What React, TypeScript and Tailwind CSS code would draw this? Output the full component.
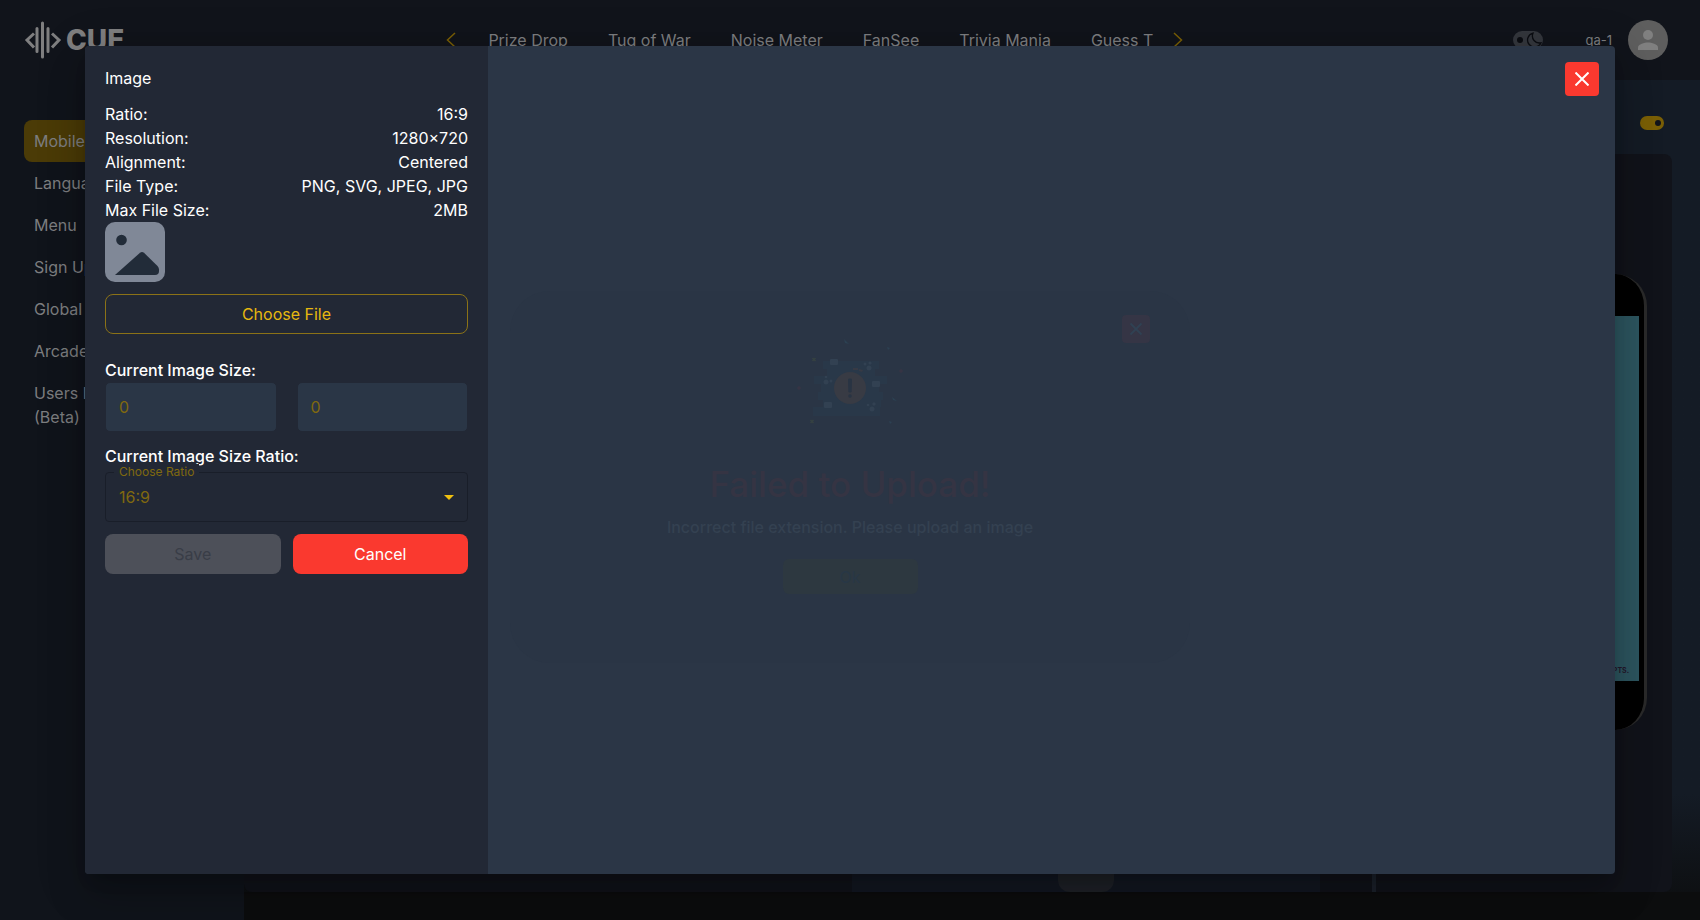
import { useState } from "react";

const specs: [string, string][] = [
  ["Ratio:", "16:9"],
  ["Resolution:", "1280×720"],
  ["Alignment:", "Centered"],
  ["File Type:", "PNG, SVG, JPEG, JPG"],
  ["Max File Size:", "2MB"],
];

const tabs = ["Prize Drop", "Tug of War", "Noise Meter", "FanSee", "Trivia Mania", "Guess T"];
const menu = ["Mobile", "Language", "Menu", "Sign Up", "Global", "Arcade"];

function Logo() {
  return (
    <div className="flex items-center gap-1 text-[#7f7f80]">
      <svg width="38" height="38" viewBox="0 0 38 38" fill="none" stroke="currentColor" strokeWidth="3" aria-hidden="true">
        <path d="M10 12.500 3 19l7 7.500" />
        <path d="M28 12.500 35 19l-7 7.500" />
        <path d="M13 7.500v23M18.500 2v34M24 7.500v23" strokeLinecap="round" />
      </svg>
      <span className="text-[28px] leading-8 font-extrabold">CUE</span>
    </div>
  );
}

function Chevron({ flip }: { flip?: boolean }) {
  return (
    <svg width="10" height="16" viewBox="0 0 10 16" fill="none" stroke="#7a5f06" strokeWidth="1.500" className={flip ? "rotate-180" : ""} aria-hidden="true">
      <path d="M9 1 1.500 8 9 15" />
    </svg>
  );
}

function Header() {
  return (
    <header className="flex h-20 shrink-0 items-center bg-[#11141b] pr-8 pl-6 text-[#7d7e80]">
      <Logo />
      <nav className="flex flex-1 items-center justify-center gap-8 pr-2">
        <button type="button" aria-label="Previous games"><Chevron /></button>
        <div className="flex gap-10">
          {tabs.map((t) => (
            <a key={t} href="#" className="whitespace-nowrap">{t}</a>
          ))}
        </div>
        <button type="button" aria-label="Next games" className="-ml-3"><Chevron flip /></button>
      </nav>
      <div className="flex items-center">
        <button type="button" aria-label="Toggle theme" className="mr-[42px] flex h-[18px] w-[30px] items-center justify-between rounded-full bg-[#34373d] pr-px pl-1">
          <span className="size-1.5 rounded-full bg-[#0b0d12]" />
          <svg width="16" height="16" viewBox="0 0 16 16" fill="none" stroke="#0b0d12" strokeWidth="1.300" aria-hidden="true">
            <path d="M7 1.200a7 7 0 1 0 8 9.600A7 7 0 0 1 7 1.200z" />
          </svg>
        </button>
        <span className="mr-4 pt-0.5 text-[13px]">qa-1</span>
        <svg width="40" height="40" viewBox="0 0 40 40" aria-hidden="true">
          <circle cx="20" cy="20" r="20" fill="#5e5e5e" />
          <circle cx="20" cy="15" r="5" fill="#808080" />
          <path d="M10 30v-2.500c0-3.300 6.700-5 10-5s10 1.700 10 5V30z" fill="#808080" />
        </svg>
      </div>
    </header>
  );
}

function Phone() {
  return (
    <div className="mt-[120px] mr-[25px] flex h-[456px] w-[230px] flex-col rounded-[32px] border-r-[3px] border-[#2a2a2a] bg-black pt-[42px] pr-[5px] pb-[49px]">
      <div className="flex flex-1 items-end justify-end bg-[#2d5660] pr-2.5 pb-1 text-[7px] leading-3 font-bold text-[#24182c]">
        RECEIPTS.
      </div>
    </div>
  );
}

function Page() {
  return (
    <div className="flex h-full flex-col overflow-hidden bg-[#0c0d0e]">
      <Header />
      <div className="flex min-h-0 flex-1">
        <aside className="w-[244px] shrink-0 bg-[#10141b] px-6 pt-10 text-[#7d7e80]">
          <ul>
            {menu.map((m, i) => (
              <li key={m}>
                <a href="#" className={i === 0 ? "block h-[42px] rounded-lg bg-[#4b3b07] px-2.5 leading-[42px]" : "block h-[42px] px-2.5 leading-[42px]"}>{m}</a>
              </li>
            ))}
            <li>
              <a href="#" className="block px-2.5 py-[9px] leading-6">Users Page<br />(Beta)</a>
            </li>
          </ul>
        </aside>
        <main className="flex min-w-0 flex-1 flex-col bg-linear-to-b from-[#141b25] from-85% to-[#0c0d0e]">
          <div className="flex h-[74px] shrink-0 items-center justify-end pt-3 pr-9">
            <button type="button" aria-label="Enabled" className="flex h-3.5 w-6 items-center justify-end rounded-full bg-[#7a5f06] pr-[3px]">
              <span className="size-1.5 rounded-full bg-[#11141b]" />
            </button>
          </div>
          <div className="mr-7 flex h-[738px] shrink-0 justify-end rounded-lg bg-[#11131a]">
            <div className="flex min-w-0 flex-1 items-end">
              <div className="flex-1" />
              <div className="flex h-16 w-[468px] items-end justify-center bg-[#131822]">
                <div className="h-10 w-14 rounded-xl bg-[#1f2228]" />
              </div>
              <div className="mr-4 ml-[52px] h-16 w-1 bg-[#1c222c]" />
            </div>
            <div className="flex w-[280px] justify-end">
              <Phone />
            </div>
          </div>
          <div className="flex-1 bg-[#0c0d0e]" />
        </main>
      </div>
    </div>
  );
}

function ErrorNotice() {
  return (
    <section className="pointer-events-none absolute inset-0 flex items-center justify-center pt-[34px]" aria-label="Upload error">
      <div className="relative flex h-[372px] w-[680px] flex-col items-center rounded-[40px] bg-[#2a3545] pt-[38px]">
        <button type="button" aria-label="Close error" className="absolute top-6 right-10 flex size-7 items-center justify-center rounded-sm bg-[#353545]">
          <svg width="14" height="14" viewBox="0 0 14 14" stroke="#304153" strokeWidth="1.800" aria-hidden="true">
            <path d="m1.500 1.500 11 11M12.500 1.500l-11 11" />
          </svg>
        </button>
        <svg width="120" height="100" viewBox="790 330 120 100" aria-hidden="true">
          <g fill="#293849">
            <path d="M823 362h56v8h-56zM827 370h48v7h-48zM814 377h73v8h-73zM821 385h58v8h-58zM818 393h65v8h-65zM823 401h58v7h-58zM813 408h67v9h-67z" />
          </g>
          <g fill="#324152">
            <rect x="830" y="360" width="8" height="6" rx="1" />
            <rect x="872" y="382" width="8" height="6" rx="1" />
            <rect x="824" y="403" width="8" height="6" rx="1" />
            <circle cx="826" cy="383" r="2.500" /><circle cx="831" cy="382" r="1.500" /><circle cx="826" cy="378" r="1.300" />
            <circle cx="869" cy="369" r="2.500" /><circle cx="865" cy="365" r="1.500" /><circle cx="870" cy="364" r="1.600" />
            <circle cx="872" cy="410" r="2.500" /><circle cx="868" cy="406" r="1.300" /><circle cx="874" cy="405" r="1.700" />
          </g>
          <path d="M853 369h5v2h-5zM859 370l4 1-1 2-3-1z" fill="#373a45" />
          <circle cx="850" cy="389" r="16" fill="#383b44" />
          <path d="M848.500 380h3l-.4 13h-2.200z" fill="#293443" stroke="#293443" />
          <circle cx="850" cy="397" r="1.800" fill="#293443" />
          <path d="m812.500 359 3 3m0-3-3 3M810.500 421l3 3m0-3-3 3" stroke="#364242" strokeWidth="1.500" />
          <path d="M799 387v4M797 389h4M901 370v4M899 372h4" stroke="#3a3545" />
          <path d="m844 340 5 5-4-1zM892 398l5 4-4-1zM887 348l3 1-2 2zM889 422l3 1-2 2z" fill="#2c4152" />
        </svg>
        <h2 className="mt-7 text-[35px] leading-[54px] font-medium text-[#353443]">Failed to Upload!</h2>
        <p className="mt-1 leading-6 font-medium text-[#344151]">Incorrect file extension. Please upload an image</p>
        <button type="button" className="mt-5 h-[35px] w-[135px] rounded-md bg-[#2d3840] text-[#283746]">Ok</button>
      </div>
    </section>
  );
}

function ImageDialog() {
  const [width, setWidth] = useState("0");
  const [height, setHeight] = useState("0");
  const field = "h-[50px] w-full min-w-0 rounded-[5px] border border-[#222835] bg-[#2a3646] px-[13px] text-[#80690f] outline-none";
  return (
    <div role="dialog" aria-modal="true" aria-label="Image" className="relative flex h-[90%] w-[90%] overflow-hidden rounded bg-[#2b3646]">
      <form className="flex w-[403px] shrink-0 flex-col bg-[#222835] px-5 pt-5 text-white" onSubmit={(e) => e.preventDefault()}>
        <h1 className="mb-3 leading-6">Image</h1>
        <dl>
          {specs.map(([k, v]) => (
            <div key={k} className="flex justify-between leading-6">
              <dt>{k}</dt>
              <dd>{v}</dd>
            </div>
          ))}
        </dl>
        <svg width="60" height="60" viewBox="0 0 60 60" aria-hidden="true">
          <rect width="60" height="60" rx="10" fill="#808897" />
          <circle cx="16.500" cy="18" r="5.300" fill="#222c39" />
          <path d="M10 53 35 30.800q2-1.600 4 0L52.500 44q1.500 1.500 1.500 3.500v1.500q0 4-4 4z" fill="#222c39" />
        </svg>
        <button type="button" className="mt-3 h-10 shrink-0 rounded-lg border border-[#8b7217] text-[#e6b80f]">Choose File</button>
        <h2 className="mt-6 leading-6 font-medium">Current Image Size:</h2>
        <div className="flex gap-5">
          <input aria-label="Image width" className={field} value={width} onChange={(e) => setWidth(e.target.value)} />
          <input aria-label="Image height" className={field} value={height} onChange={(e) => setHeight(e.target.value)} />
        </div>
        <h2 className="mt-3 leading-6 font-medium">Current Image Size Ratio:</h2>
        <div className="relative mt-1">
          <label htmlFor="ratio" className="absolute -top-2 left-[9px] bg-[#222835] px-[5px] text-xs leading-4 text-[#80690f]">Choose Ratio</label>
          <select id="ratio" className="h-[50px] w-full appearance-none rounded border border-[#191e29] bg-transparent px-[13px] text-[#80690f]">
            <option>16:9</option>
          </select>
          <svg width="10" height="5" viewBox="0 0 10 5" className="pointer-events-none absolute top-[23px] right-3.5" aria-hidden="true">
            <path d="m0 0 5 5 5-5z" fill="#f0c00f" />
          </svg>
        </div>
        <div className="mt-3 flex gap-3">
          <button type="submit" disabled className="h-10 flex-1 rounded-lg bg-[#4d5059] text-[#393d47]">Save</button>
          <button type="button" className="h-10 flex-1 rounded-lg bg-[#fa392f]">Cancel</button>
        </div>
      </form>
      <div className="flex flex-1 items-start justify-end p-4">
        <button type="button" aria-label="Close" className="flex size-[34px] items-center justify-center rounded bg-[#fa392f]">
          <svg width="14" height="14" viewBox="0 0 14 14" stroke="#fff" strokeWidth="2" aria-hidden="true">
            <path d="m.5.500 13 13M13.500.5l-13 13" />
          </svg>
        </button>
      </div>
    </div>
  );
}

export default function App() {
  return (
    <div className="relative h-screen overflow-hidden font-['Inter',sans-serif] text-base">
      <Page />
      <div className="absolute inset-0 flex items-center justify-center *:first:shadow-[0_11px_15px_-7px_#00000033,0_24px_38px_3px_#00000024,0_9px_46px_8px_#0000001f]">
        <ImageDialog />
      </div>
      <ErrorNotice />
    </div>
  );
}
